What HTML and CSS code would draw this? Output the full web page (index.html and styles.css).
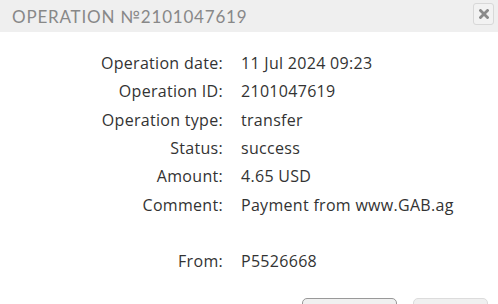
FILE: index.html
```html
<!DOCTYPE html>
<html lang="en">
<head>
    <meta charset="UTF-8">
    <title>Operation</title>
    <link rel="stylesheet" href="styles.css">
</head>
<body>
    <div class="dialog">
        <header class="dialog-head">
            <h2>Operation №2101047619</h2>
            <button class="close" aria-label="Close">
                <svg width="10" height="10" viewBox="0 0 10 10"><path d="M1.5 1.5 L8.5 8.5 M8.5 1.5 L1.5 8.5" stroke="#8a8a8a" stroke-width="2.8" stroke-linecap="square"/></svg>
            </button>
        </header>

        <div class="details">
            <span class="label">Operation date:</span><span class="value">11 Jul 2024 09:23</span>
            <span class="label">Operation ID:</span><span class="value">2101047619</span>
            <span class="label">Operation type:</span><span class="value">transfer</span>
            <span class="label">Status:</span><span class="value">success</span>
            <span class="label">Amount:</span><span class="value">4.65 USD</span>
            <span class="label">Comment:</span><span class="value">Payment from www.GAB.ag</span>
            <span class="spacer"></span>
            <span class="label">From:</span><span class="value">P5526668</span>
        </div>

        <div class="actions">
            <button class="btn btn-main" aria-label="Print"></button>
            <button class="btn" aria-label="Close"></button>
        </div>
    </div>
</body>
</html>
```

FILE: styles.css
```css
/* Ventana de operación */
body {
    margin: 0;
    background: #ffffff;
    font-family: "Open Sans", Arial, sans-serif;
    color: #333;
}
.dialog {
    width: 498px;
    height: 304px;
    overflow: hidden;
}
.dialog-head {
    display: flex;
    align-items: center;
    justify-content: space-between;
    height: 32px;
    padding: 0 4px 0 12px;
    background: #efefef;
}
.dialog-head h2 {
    margin: 0;
    font-family: "Lato", sans-serif;
    font-weight: 400;
    font-size: 17px;
    letter-spacing: 0.8px;
    text-transform: uppercase;
    color: #888;
}
.close {
    width: 21px;
    height: 22px;
    margin-top: -4px;
    padding: 0;
    display: flex;
    align-items: center;
    justify-content: center;
    background: #f2f2f2;
    border: 1px solid #d8d8d8;
    border-radius: 3px;
}
.details {
    display: grid;
    grid-template-columns: 223px 1fr;
    grid-auto-rows: 28.3px;
    column-gap: 18px;
    align-items: center;
    padding-top: 17px;
    font-size: 16px;
    letter-spacing: 0.3px;
}
.label {
    text-align: right;
}
.spacer {
    grid-column: 1 / 3;
}
.actions {
    display: flex;
    justify-content: flex-end;
    gap: 16px;
    margin-top: 23px;
    padding-right: 10px;
}
.btn {
    width: 75px;
    height: 30px;
    background: #f0f0f0;
    border: 1px solid #dcdcdc;
    border-radius: 5px;
}
.btn-main {
    width: 95px;
    border-color: #999;
}
```
